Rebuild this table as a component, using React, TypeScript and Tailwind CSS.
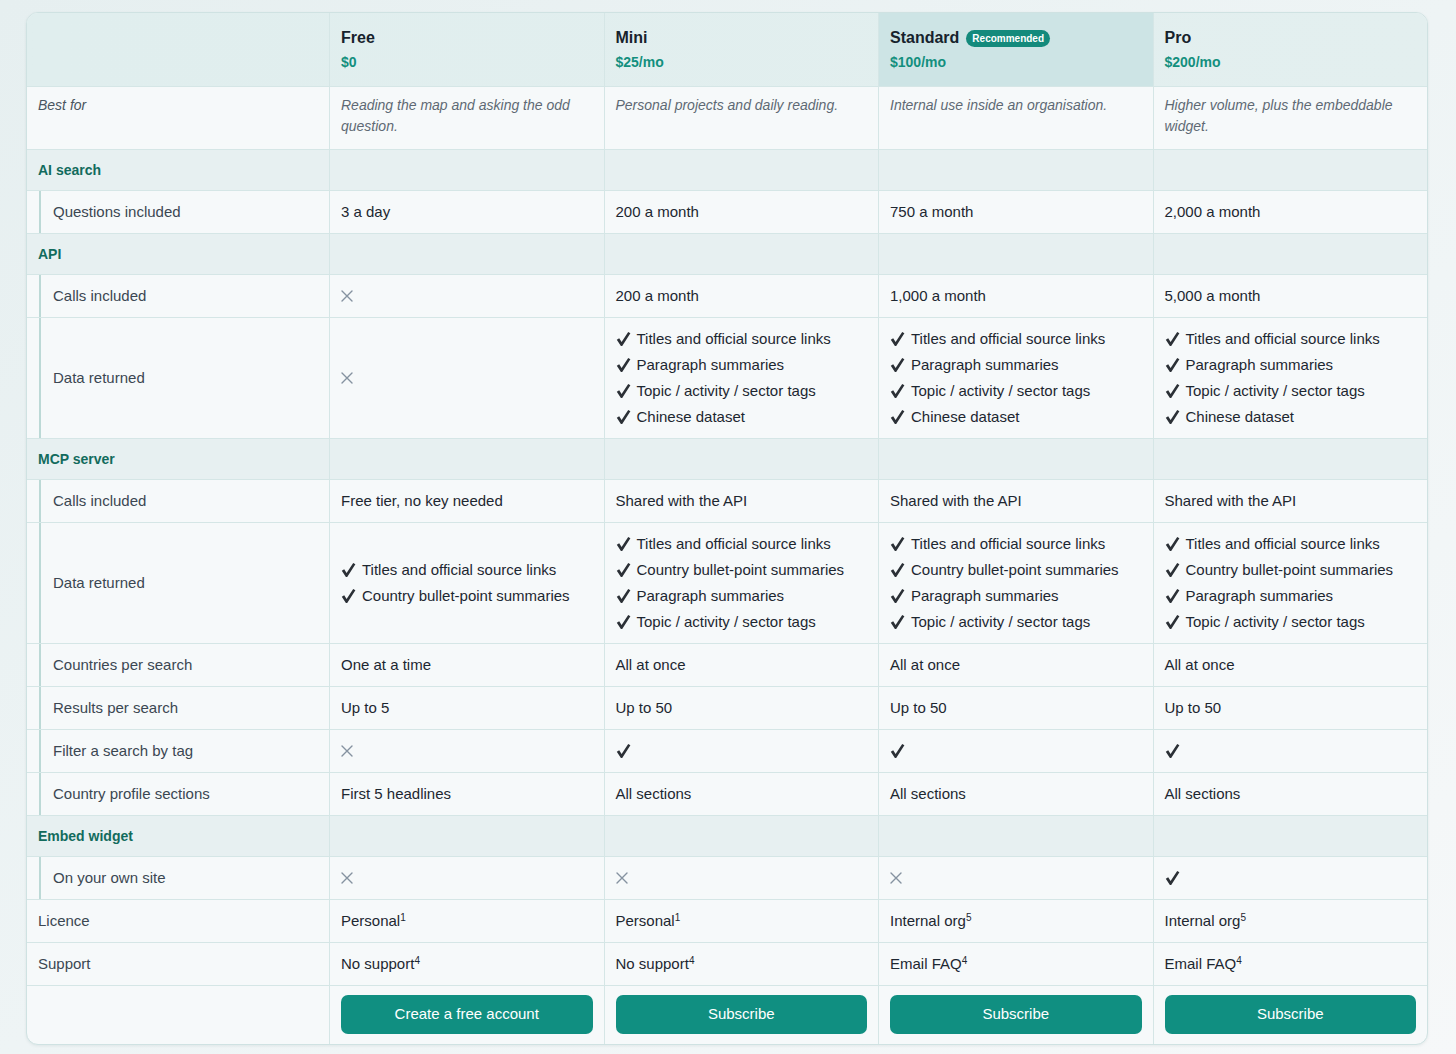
import type { ReactNode } from "react";

type Cell = ReactNode;

type Row =
  | { kind: "section"; label: string }
  | { kind: "sub"; label: string; cells: Cell[]; tall?: boolean }
  | { kind: "top"; label: string; cells: Cell[] };

const Check = () => (
  <svg width="15" height="16" viewBox="0 0 15 16" className="shrink-0" aria-hidden>
    <path d="M0.8 8.8 L3.2 7.3 L5.6 10.9 L12.2 1 L14.4 2.3 L6.2 15 L4.9 15 Z" fill="#2b3036" />
  </svg>
);

const Cross = () => (
  <svg width="12" height="12" viewBox="0 0 12 12" aria-hidden>
    <path d="M1 1 L11 11 M11 1 L1 11" stroke="#8592a0" strokeWidth="1.4" strokeLinecap="round" />
  </svg>
);

const List = ({ items }: { items: string[] }) => (
  <div className="flex flex-col">
    {items.map((item) => (
      <div key={item} className="flex h-[26px] items-center gap-[6px]">
        <Check />
        <span>{item}</span>
      </div>
    ))}
  </div>
);

const Sup = ({ text, n }: { text: string; n: string }) => (
  <span>
    {text}
    <sup className="text-[10px]">{n}</sup>
  </span>
);

const API_DATA = [
  "Titles and official source links",
  "Paragraph summaries",
  "Topic / activity / sector tags",
  "Chinese dataset",
];

const MCP_DATA = [
  "Titles and official source links",
  "Country bullet-point summaries",
  "Paragraph summaries",
  "Topic / activity / sector tags",
];

const PLANS = [
  { name: "Free", price: "$0", best: "Reading the map and asking the odd question.", cta: "Create a free account" },
  { name: "Mini", price: "$25/mo", best: "Personal projects and daily reading.", cta: "Subscribe" },
  { name: "Standard", price: "$100/mo", best: "Internal use inside an organisation.", cta: "Subscribe", recommended: true },
  { name: "Pro", price: "$200/mo", best: "Higher volume, plus the embeddable widget.", cta: "Subscribe" },
];

const ROWS: Row[] = [
  { kind: "section", label: "AI search" },
  { kind: "sub", label: "Questions included", cells: ["3 a day", "200 a month", "750 a month", "2,000 a month"] },
  { kind: "section", label: "API" },
  { kind: "sub", label: "Calls included", cells: [<Cross />, "200 a month", "1,000 a month", "5,000 a month"] },
  {
    kind: "sub",
    label: "Data returned",
    tall: true,
    cells: [<Cross />, <List items={API_DATA} />, <List items={API_DATA} />, <List items={API_DATA} />],
  },
  { kind: "section", label: "MCP server" },
  {
    kind: "sub",
    label: "Calls included",
    cells: ["Free tier, no key needed", "Shared with the API", "Shared with the API", "Shared with the API"],
  },
  {
    kind: "sub",
    label: "Data returned",
    tall: true,
    cells: [
      <List items={MCP_DATA.slice(0, 2)} />,
      <List items={MCP_DATA} />,
      <List items={MCP_DATA} />,
      <List items={MCP_DATA} />,
    ],
  },
  { kind: "sub", label: "Countries per search", cells: ["One at a time", "All at once", "All at once", "All at once"] },
  { kind: "sub", label: "Results per search", cells: ["Up to 5", "Up to 50", "Up to 50", "Up to 50"] },
  { kind: "sub", label: "Filter a search by tag", cells: [<Cross />, <Check />, <Check />, <Check />] },
  {
    kind: "sub",
    label: "Country profile sections",
    cells: ["First 5 headlines", "All sections", "All sections", "All sections"],
  },
  { kind: "section", label: "Embed widget" },
  { kind: "sub", label: "On your own site", cells: [<Cross />, <Cross />, <Cross />, <Check />] },
  {
    kind: "top",
    label: "Licence",
    cells: [
      <Sup text="Personal" n="1" />,
      <Sup text="Personal" n="1" />,
      <Sup text="Internal org" n="5" />,
      <Sup text="Internal org" n="5" />,
    ],
  },
  {
    kind: "top",
    label: "Support",
    cells: [
      <Sup text="No support" n="4" />,
      <Sup text="No support" n="4" />,
      <Sup text="Email FAQ" n="4" />,
      <Sup text="Email FAQ" n="4" />,
    ],
  },
];

const GRID = "grid grid-cols-[302px_repeat(4,minmax(0,1fr))] border-b border-[#d5e6e6]";

function TableRow({ row }: { row: Row }) {
  if (row.kind === "section") {
    return (
      <div className={`${GRID} bg-[#e7f0f1]`}>
        <div className="py-[10px] pl-[11px] text-[14px] font-bold leading-5 text-[#126b5d]">{row.label}</div>
        {[0, 1, 2, 3].map((i) => (
          <div key={i} className="border-l border-[#d5e6e6]" />
        ))}
      </div>
    );
  }

  const pad = row.kind === "sub" && row.tall ? "py-2" : "py-[11px]";

  return (
    <div className={GRID}>
      {row.kind === "sub" ? (
        <div className="pl-[12px]">
          <div className="flex h-full items-center border-l-2 border-[#bcd9d6] pl-[12px] text-[#3b4752]">
            {row.label}
          </div>
        </div>
      ) : (
        <div className="flex items-center pl-[11px] text-[#3b4752]">{row.label}</div>
      )}
      {row.cells.map((cell, i) => (
        <div
          key={i}
          className={`flex min-h-[42px] items-center border-l border-[#d5e6e6] px-[11px] leading-5 text-[#1d2731] ${pad}`}
        >
          {cell}
        </div>
      ))}
    </div>
  );
}

export default function App() {
  return (
    <main
      className="min-h-screen bg-gradient-to-br from-[#e6eff0] via-[#eef4f5] to-[#f6f8f9] pb-[8px] pt-[12px] text-[15px]"
      style={{ fontFamily: '"Liberation Sans", Arial, sans-serif' }}
    >
      <div className="ml-[26px] w-[1402px] overflow-hidden rounded-[12px] border border-[#cfe2e2] bg-[#f6f9fa] shadow-[0_1px_3px_rgba(20,60,60,0.08)]">
        {/* plan headers */}
        <div className={`${GRID} bg-gradient-to-r from-[#e0eeee] to-[#e3efef]`}>
          <div />
          {PLANS.map((plan) => (
            <div
              key={plan.name}
              className={`border-l border-[#d5e6e6] px-[11px] pb-[12px] pt-[13px] ${plan.recommended ? "bg-[#cde4e5]" : ""}`}
            >
              <div className="flex h-6 items-center gap-[7px] text-[16px] font-bold text-[#17222c]">
                {plan.name}
                {plan.recommended ? (
                  <span className="rounded-full bg-[#148a7c] px-[6px] py-[1px] text-[10px] font-bold leading-[15px] text-white">
                    Recommended
                  </span>
                ) : null}
              </div>
              <div className="text-[14px] font-bold leading-6 text-[#138f7e]">{plan.price}</div>
            </div>
          ))}
        </div>

        {/* best for */}
        <div className={GRID}>
          <div className="pb-[12px] pl-[11px] pt-2 text-[14px] italic leading-[21px] text-[#4a5560]">Best for</div>
          {PLANS.map((plan) => (
            <div
              key={plan.name}
              className="border-l border-[#d5e6e6] px-[11px] pb-[12px] pt-2 text-[14px] italic leading-[21px] text-[#5e6974]"
            >
              {plan.best}
            </div>
          ))}
        </div>

        {ROWS.map((row, i) => (
          <TableRow key={i} row={row} />
        ))}

        {/* call to action */}
        <div className="grid grid-cols-[302px_repeat(4,minmax(0,1fr))]">
          <div />
          {PLANS.map((plan) => (
            <div key={plan.name} className="border-l border-[#d5e6e6] px-[11px] pb-[10px] pt-[9px]">
              <button className="h-[39px] w-full rounded-[7px] bg-[#108f81] text-[15px] text-white">{plan.cta}</button>
            </div>
          ))}
        </div>
      </div>
    </main>
  );
}
